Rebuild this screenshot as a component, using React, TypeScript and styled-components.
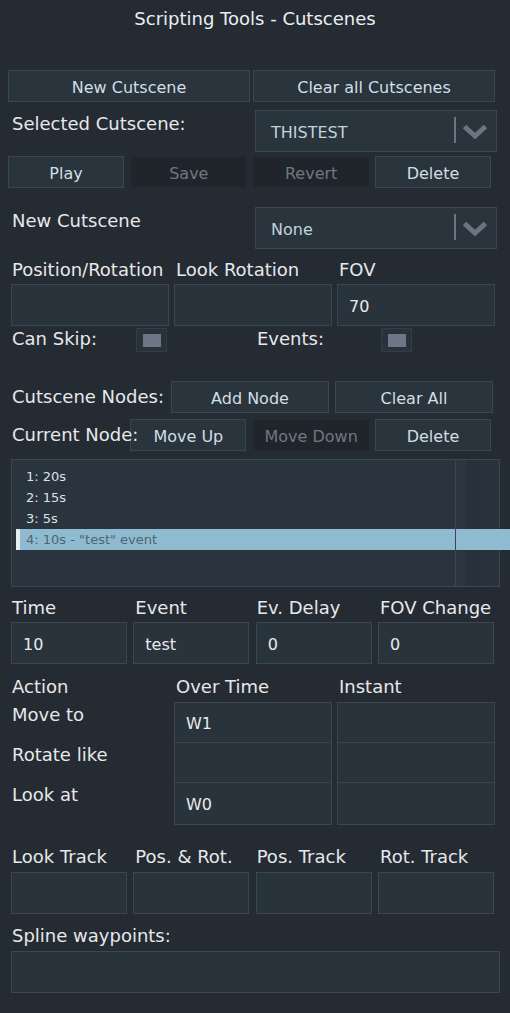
import React from "react";
import styled, { createGlobalStyle } from "styled-components";

const C = {
  bg: "#252b33",
  box: "#29343d",
  field: "#28333c",
  line: "#3a4650",
  dim: "#1f252b",
  label: "#e6e8ea",
  btnText: "#d2dee4",
  dimText: "#6e7882",
  value: "#bfd3de",
  pick: "#8ebbd0",
  grip: "#6b7580",
};

const GlobalStyle = createGlobalStyle`
  * { box-sizing: border-box; }
  html, body { margin: 0; padding: 0; background: ${C.bg}; }
  body { font-family: "DejaVu Sans", "Liberation Sans", sans-serif; }
`;

const Panel = styled.main`
  width: 510px;
  height: 1013px;
  overflow: hidden;
  background: ${C.bg};
  display: flex;
  flex-direction: column;
`;

const Title = styled.h1`
  margin: 0;
  height: 38px;
  line-height: 38px;
  text-align: center;
  font-size: 18px;
  font-weight: normal;
  color: #eceef0;
`;

/* captions may run past their cell (e.g. "Current Node:"), so they sit above neighbours */
const Label = styled.span<{ $indent?: number; $pad?: number }>`
  position: relative;
  z-index: 1;
  display: block;
  font-size: 18px;
  line-height: 22px;
  color: ${C.label};
  white-space: nowrap;
  padding-left: ${(p) => p.$indent ?? 0}px;
  padding-top: ${(p) => p.$pad ?? 0}px;
`;

/* toolbar of action buttons, optionally led by a caption */
const ButtonBar = styled.div<{ $top: number; $cols: string; $gap: number }>`
  display: grid;
  grid-template-columns: ${(p) => p.$cols};
  column-gap: ${(p) => p.$gap}px;
  align-items: center;
  height: 32px;
  margin: ${(p) => p.$top}px 0 0 8px;
`;

const Button = styled.button<{ $off?: boolean }>`
  height: ${(p) => (p.$off ? 30 : 32)}px;
  margin: 0 0 0 ${(p) => (p.$off ? 1 : 0)}px;
  padding: 3px 0 0;
  font: inherit;
  font-size: 16px;
  color: ${(p) => (p.$off ? C.dimText : C.btnText)};
  background: ${(p) => (p.$off ? C.dim : C.box)};
  border: 1px solid ${(p) => (p.$off ? C.dim : C.line)};
  border-radius: 0;
  white-space: nowrap;
`;

/* caption on the left, picker on the right */
const FieldRow = styled.div<{ $top: number }>`
  display: grid;
  grid-template-columns: 243px 242px;
  align-items: start;
  margin: ${(p) => p.$top}px 0 0 12px;
  height: 42px;
`;

const Dropdown = styled.div`
  display: flex;
  align-items: center;
  height: 42px;
  background: ${C.box};
  border: 1px solid ${C.line};
  padding: 0 8px 0 15px;
`;

const DropValue = styled.span`
  flex: 1;
  padding-top: 3px;
  font-size: 16px;
  color: ${C.value};
`;

const DropDivider = styled.span`
  width: 2px;
  height: 26px;
  margin-bottom: 3px;
  background: ${C.grip};
`;

const Chevron = styled.svg`
  width: 26px;
  height: 15px;
  margin-left: 6px;
`;

const Columns = styled.div<{ $top: number; $n: 3 | 4 }>`
  display: grid;
  grid-template-columns: ${(p) => (p.$n === 3 ? "repeat(3, 158px)" : "repeat(4, 116px)")};
  column-gap: ${(p) => (p.$n === 3 ? 5 : 6.33)}px;
  margin: ${(p) => p.$top}px 0 0 11px;
`;

const InputBox = styled.div<{ $wide?: boolean }>`
  width: ${(p) => (p.$wide ? "489px" : "auto")};
  height: 42px;
  display: flex;
  align-items: center;
  padding: 2px 0 0 11px;
  background: ${C.field};
  border: 1px solid ${C.line};
  font-size: 16px;
  color: #e8eaec;
`;

const CheckRow = styled.div`
  display: grid;
  grid-template-columns: 125px 121px 124px 31px;
  align-items: start;
  height: 24px;
  margin: 2px 0 0 11px;
`;

const CheckBox = styled.span`
  width: 31px;
  height: 24px;
  display: flex;
  align-items: center;
  justify-content: center;
  background: #28323b;
  border: 1px solid #323d47;
  &::after {
    content: "";
    width: 18px;
    height: 13px;
    background: #6d7586;
  }
`;

const NodeList = styled.div`
  position: relative;
  display: flex;
  width: 489px;
  height: 128px;
  margin: 8px 0 0 11px;
  background: #29343e;
  border: 1px solid ${C.line};
`;

const Entries = styled.ul`
  flex: 1;
  margin: 0;
  padding: 6px 0 0;
  list-style: none;
`;

const Entry = styled.li<{ $picked?: boolean }>`
  position: ${(p) => (p.$picked ? "relative" : "static")};
  z-index: ${(p) => (p.$picked ? 1 : "auto")};
  height: 21px;
  line-height: 22px;
  margin: 0 ${(p) => (p.$picked ? -55 : 0)}px 0 4px;
  padding-left: 6px;
  border-left: 4px solid ${(p) => (p.$picked ? "#e6ecef" : "transparent")};
  background: ${(p) => (p.$picked ? C.pick : "transparent")};
  font-size: 13px;
  color: ${(p) => (p.$picked ? "#4e6472" : "#dde2e5")};
  white-space: nowrap;
`;

const ScrollTrack = styled.div`
  position: relative;
  width: 44px;
  background: linear-gradient(
    90deg,
    rgba(255, 255, 255, 0.01) 0 11px,
    rgba(0, 0, 0, 0.05) 11px 27px,
    rgba(0, 0, 0, 0.02) 27px
  );
  &::before {
    content: "";
    position: absolute;
    z-index: 2;
    left: 0;
    top: 0;
    bottom: 0;
    width: 1px;
    background: ${C.line};
  }
`;

const ActionLabels = styled.div`
  display: grid;
  grid-template-rows: 40px 40px 43px;
`;

const CellStack = styled.div`
  display: grid;
  grid-template-rows: 39px 40px 42px;
  background: ${C.field};
  border: 1px solid ${C.line};
`;

const Cell = styled.div`
  display: flex;
  align-items: center;
  padding: 2px 0 0 11px;
  font-size: 16px;
  color: #e8eaec;
  & + & {
    border-top: 1px solid ${C.line};
  }
`;

function Picker({ value }: { value: string }) {
  return (
    <Dropdown>
      <DropValue>{value}</DropValue>
      <DropDivider />
      <Chevron viewBox="0 0 26 15">
        <polyline points="2.5,2.5 13,12 23.5,2.5" fill="none" stroke={C.grip} strokeWidth="5" />
      </Chevron>
    </Dropdown>
  );
}

export default function App() {
  return (
    <Panel>
      <GlobalStyle />
      <Title>Scripting Tools - Cutscenes</Title>

      <ButtonBar $top={32} $cols="242px 242px" $gap={3}>
        <Button>New Cutscene</Button>
        <Button>Clear all Cutscenes</Button>
      </ButtonBar>

      <FieldRow $top={8}>
        <Label $pad={3}>Selected Cutscene:</Label>
        <Picker value="THISTEST" />
      </FieldRow>

      <ButtonBar $top={4} $cols="repeat(4, 116px)" $gap={6.33}>
        <Button>Play</Button>
        <Button $off>Save</Button>
        <Button $off>Revert</Button>
        <Button>Delete</Button>
      </ButtonBar>

      <FieldRow $top={19}>
        <Label $pad={3}>New Cutscene</Label>
        <Picker value="None" />
      </FieldRow>

      <Columns $top={10} $n={3}>
        <Label $indent={1}>Position/Rotation</Label>
        <Label $indent={2}>Look Rotation</Label>
        <Label $indent={2}>FOV</Label>
      </Columns>
      <Columns $top={3} $n={3}>
        <InputBox />
        <InputBox />
        <InputBox>70</InputBox>
      </Columns>

      <CheckRow>
        <Label $indent={1}>Can Skip:</Label>
        <CheckBox />
        <Label>Events:</Label>
        <CheckBox />
      </CheckRow>

      <ButtonBar $top={29} $cols="157px 158px 158px" $gap={6}>
        <Label $indent={4}>Cutscene Nodes:</Label>
        <Button>Add Node</Button>
        <Button>Clear All</Button>
      </ButtonBar>

      <ButtonBar $top={6} $cols="repeat(4, 116px)" $gap={6.33}>
        <Label $indent={4}>Current Node:</Label>
        <Button>Move Up</Button>
        <Button $off>Move Down</Button>
        <Button>Delete</Button>
      </ButtonBar>

      <NodeList>
        <Entries>
          <Entry>1: 20s</Entry>
          <Entry>2: 15s</Entry>
          <Entry>3: 5s</Entry>
          <Entry $picked>4: 10s - "test" event</Entry>
        </Entries>
        <ScrollTrack />
      </NodeList>

      <Columns $top={10} $n={4}>
        <Label $indent={1}>Time</Label>
        <Label $indent={2}>Event</Label>
        <Label $indent={1}>Ev. Delay</Label>
        <Label $indent={2}>FOV Change</Label>
      </Columns>
      <Columns $top={3} $n={4}>
        <InputBox>10</InputBox>
        <InputBox>test</InputBox>
        <InputBox>0</InputBox>
        <InputBox>0</InputBox>
      </Columns>

      <Columns $top={12} $n={3}>
        <Label $indent={1}>Action</Label>
        <Label $indent={2}>Over Time</Label>
        <Label $indent={2}>Instant</Label>
      </Columns>
      <Columns $top={4} $n={3}>
        <ActionLabels>
          <Label $indent={1} $pad={2}>Move to</Label>
          <Label $indent={1} $pad={2}>Rotate like</Label>
          <Label $indent={1} $pad={2}>Look at</Label>
        </ActionLabels>
        <CellStack>
          <Cell>W1</Cell>
          <Cell />
          <Cell>W0</Cell>
        </CellStack>
        <CellStack>
          <Cell />
          <Cell />
          <Cell />
        </CellStack>
      </Columns>

      <Columns $top={21} $n={4}>
        <Label $indent={1}>Look Track</Label>
        <Label $indent={2}>Pos. &amp; Rot.</Label>
        <Label $indent={1}>Pos. Track</Label>
        <Label $indent={2}>Rot. Track</Label>
      </Columns>
      <Columns $top={4} $n={4}>
        <InputBox />
        <InputBox />
        <InputBox />
        <InputBox />
      </Columns>

      <Columns $top={11} $n={3}>
        <Label $indent={1}>Spline waypoints:</Label>
      </Columns>
      <Columns $top={4} $n={3}>
        <InputBox $wide />
      </Columns>
    </Panel>
  );
}
